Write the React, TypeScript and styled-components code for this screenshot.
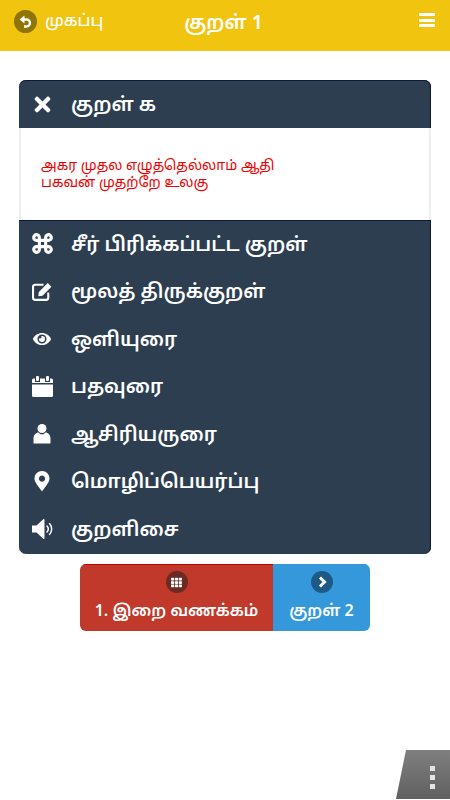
import React from "react";
import styled, { createGlobalStyle } from "styled-components";
import { FaTimes, FaEye, FaMapMarkerAlt, FaTh } from "react-icons/fa";

const Global = createGlobalStyle`
  html, body { margin: 0; padding: 0; background: #fff; }
  body { font-family: "Noto Sans Tamil", "Noto Sans", "Lohit Tamil", "Liberation Sans", sans-serif; }
  #root { width: 450px; height: 800px; overflow: hidden; }
`;
const Page = styled.div`
  position: relative;
  width: 450px;
  height: 800px;
  background: #fff;
  display: flex;
  flex-direction: column;
  align-items: center;
`;
const Header = styled.header`
  width: 100%;
  height: 51px;
  background: #f1c40f;
  color: #fff;
  display: grid;
  grid-template-columns: 1fr auto 1fr;
  align-items: start;
  padding: 9px 15px 0 14px;
  box-sizing: border-box;
`;
const HomeLink = styled.div`
  display: flex;
  align-items: center;
  gap: 8px;
  font-size: 16.2px;
  font-weight: 500;
  line-height: 23px;
`;
const HomeLabel = styled.span`
  padding-top: 2px;
`;
const BackBadge = styled.span`
  width: 23px;
  height: 23px;
  border-radius: 50%;
  background: #8f7406;
  display: flex;
  align-items: center;
  justify-content: center;
`;
const Title = styled.div`
  font-size: 19.5px;
  font-weight: 600;
  line-height: 30px;
  margin-left: -2px;
`;
const MenuBars = styled.div`
  justify-self: end;
  width: 16px;
  height: 14px;
  margin-top: 4px;
  display: flex;
  flex-direction: column;
  justify-content: space-between;
`;
const MenuBar = styled.span`
  height: 3px;
  background: #fff;
  border-radius: 1px;
`;
const Panel = styled.section`
  width: 412px;
  height: 474px;
  margin-top: 29px;
  background: #2c3e50;
  border-radius: 7px;
  box-shadow: inset 0 1px 0 #0d1a3a, inset -1px 0 0 #0d1a3a;
  color: #fff;
  overflow: hidden;
`;
const Row = styled.div`
  height: 47.5px;
  box-sizing: border-box;
  padding: 4px 0 0 13px;
  display: flex;
  align-items: center;
  font-size: 19.6px;
  font-weight: 600;
`;
const HeadRow = styled(Row)`
  height: 48px;
`;
const IconBox = styled.span<{ $size: number }>`
  width: 20px;
  height: 22px;
  margin: -4px 19px 0 0;
  display: flex;
  flex-shrink: 0;
  align-items: center;
  justify-content: center;
  font-size: ${(p) => p.$size}px;
  svg { flex-shrink: 0; }
`;
const Verse = styled.div`
  height: 92px;
  background: #fff;
  border-left: 2px solid #eee;
  border-right: 2px solid #eee;
  box-sizing: border-box;
  padding: 30px 20px 0;
  color: #f00000;
  font-size: 14px;
  line-height: 17px;
`;
const RowList = styled.div`
  box-shadow: inset 0 1px 0 #0d1a3a;
`;
const Nav = styled.nav`
  display: flex;
  width: 290px;
  height: 67px;
  margin-top: 10px;
  border-radius: 6px;
  overflow: hidden;
  color: #fff;
`;
const NavButton = styled.div<{ $bg: string; $w: number; $edge: string }>`
  width: ${(p) => p.$w}px;
  background: ${(p) => p.$bg};
  box-shadow: inset 0 1px 0 ${(p) => p.$edge};
  display: flex;
  flex-direction: column;
  align-items: center;
  padding-top: 7px;
  box-sizing: border-box;
  font-size: 16px;
  font-weight: 600;
  line-height: 22px;
  gap: 8px;
`;
const NavBadge = styled.span<{ $bg: string }>`
  width: 22px;
  height: 22px;
  border-radius: 50%;
  background: ${(p) => p.$bg};
  display: flex;
  align-items: center;
  justify-content: center;
  font-size: 11px;
`;
const Corner = styled.div`
  position: absolute;
  right: 0;
  bottom: 1px;
  width: 54px;
  height: 49px;
  background: linear-gradient(#7f7f7f, #606060);
  clip-path: polygon(10px 0, 100% 0, 100% 100%, 0 100%);
  display: flex;
  flex-direction: column;
  align-items: center;
  justify-content: center;
  gap: 4px;
  padding: 6px 0 0 18px;
  box-sizing: border-box;
`;
const Dot = styled.span`
  width: 5px;
  height: 5px;
  background: #e4e4e4;
`;

const CommandIcon = () => (
  <svg width="21" height="21" viewBox="0 0 20 20" fill="none" stroke="currentColor" strokeWidth="3">
    <path d="M7 7h6v6H7zM7 7H4.500A2.700 2.700 0 1 1 7 4.500zM13 7V4.500A2.700 2.700 0 1 1 15.500 7zM13 13h2.500A2.700 2.700 0 1 1 13 15.500zM7 13v2.500A2.700 2.700 0 1 1 4.500 13z" />
  </svg>
);
const EditIcon = () => (
  <svg width="21" height="21" viewBox="0 0 20 20" fill="none">
    <path d="M15.500 11v5A2 2 0 0 1 13.500 18H3A2 2 0 0 1 1 16V5.500A2 2 0 0 1 3 3.500h8" stroke="currentColor" strokeWidth="2" />
    <path d="M6.500 10.500 15 2l3.500 3.500L10 14l-4 .5z" fill="currentColor" />
  </svg>
);
const PersonIcon = () => (
  <svg width="20" height="22" viewBox="0 0 20 22" fill="currentColor">
    <circle cx="10" cy="5.500" r="4.500" />
    <path d="M1.500 20.500V15.500C1.500 12 4 9.500 6.500 9.500c1 1.300 2.100 1.800 3.500 1.800s2.500-.5 3.500-1.800c2.500 0 5 2.500 5 6v5z" />
  </svg>
);
const BackIcon = () => (
  <svg width="13" height="14" viewBox="0 0 13 14" fill="none">
    <path d="M3 4.500H7.500a3.300 3.300 0 0 1 0 7H5" stroke="#fff" strokeWidth="2.400" />
    <path d="M5.500 0.500V8.500L0.500 4.500z" fill="#fff" />
  </svg>
);
const CalendarIcon = () => (
  <svg width="21" height="21" viewBox="0 0 21 21" fill="currentColor">
    <rect x="4" y="0" width="3" height="5" rx="1" />
    <rect x="14" y="0" width="3" height="5" rx="1" />
    <path d="M1.500 2.500H3V6h5V2.500h5V6h5V2.500h1.500A1.500 1.500 0 0 1 21 4v3H0V4a1.500 1.500 0 0 1 1.500-1.500z" />
    <path d="M0 8.500h21V19.500A1.500 1.500 0 0 1 19.500 21H1.500A1.500 1.500 0 0 1 0 19.500z" />
  </svg>
);
const VolumeIcon = () => (
  <svg width="21" height="20" viewBox="0 0 21 20" fill="none">
    <path d="M0 6.500h4.500L11 .5A.8.800 0 0 1 12.500 1V19A.8.800 0 0 1 11 19.500L4.500 13.500H0z" fill="currentColor" />
    <path d="M15 7a4.500 4.500 0 0 1 0 6M17.500 4.500a8 8 0 0 1 0 11" stroke="currentColor" strokeWidth="1.500" strokeLinecap="round" />
  </svg>
);
const ChevronIcon = () => (
  <svg width="12" height="12" viewBox="0 0 12 12" fill="none">
    <path d="M4 1.500 8.500 6 4 10.500" stroke="#fff" strokeWidth="3" />
  </svg>
);

const rows = [
  { size: 20, icon: <CommandIcon />, label: "சீர் பிரிக்கப்பட்ட குறள்" },
  { size: 20, icon: <EditIcon />, label: "மூலத் திருக்குறள்" },
  { size: 18, icon: <FaEye />, label: "ஒளியுரை" },
  { size: 22, icon: <CalendarIcon />, label: "பதவுரை" },
  { size: 20, icon: <PersonIcon />, label: "ஆசிரியருரை" },
  { size: 20, icon: <FaMapMarkerAlt />, label: "மொழிப்பெயர்ப்பு" },
  { size: 19, icon: <VolumeIcon />, label: "குறளிசை" },
];

export default function App() {
  return (
    <Page>
      <Global />
      <Header>
        <HomeLink>
          <BackBadge><BackIcon /></BackBadge>
          <HomeLabel>முகப்பு</HomeLabel>
        </HomeLink>
        <Title>குறள் 1</Title>
        <MenuBars><MenuBar /><MenuBar /><MenuBar /></MenuBars>
      </Header>
      <Panel>
        <HeadRow>
          <IconBox $size={23}><FaTimes /></IconBox>
          குறள் க
        </HeadRow>
        <Verse>
          அகர முதல எழுத்தெல்லாம் ஆதி
          <br />
          பகவன் முதற்றே உலகு
        </Verse>
        <RowList>
          {rows.map((r) => (
            <Row key={r.label}>
              <IconBox $size={r.size}>{r.icon}</IconBox>
              {r.label}
            </Row>
          ))}
        </RowList>
      </Panel>
      <Nav>
        <NavButton $bg="#c0392b" $w={193} $edge="#c00000">
          <NavBadge $bg="#6c2a22"><FaTh /></NavBadge>
          1. இறை வணக்கம்
        </NavButton>
        <NavButton $bg="#3498db" $w={97} $edge="#3498db">
          <NavBadge $bg="#1f5a87"><ChevronIcon /></NavBadge>
          குறள் 2
        </NavButton>
      </Nav>
      <Corner><Dot /><Dot /><Dot /></Corner>
    </Page>
  );
}
